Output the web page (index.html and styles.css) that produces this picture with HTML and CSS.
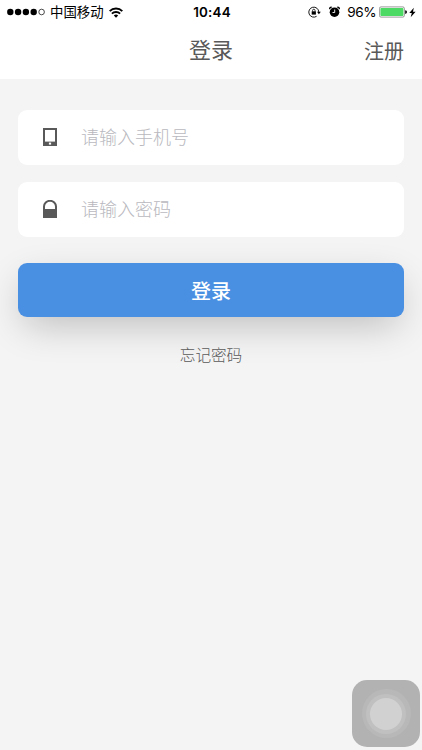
FILE: index.html
```html
<!DOCTYPE html>
<html lang="zh-CN">
<head>
    <meta charset="UTF-8">
    <meta name="viewport" content="width=device-width, initial-scale=1.0">
    <title>登录</title>
    <link rel="stylesheet" href="styles.css">
</head>
<body>

    <header class="header">
        <div class="status-bar">
            <div class="status-left">
                <svg class="signal" width="38" height="8" viewBox="0 0 38 8">
                    <circle cx="3.3" cy="4" r="3.2"/>
                    <circle cx="11.1" cy="4" r="3.2"/>
                    <circle cx="18.9" cy="4" r="3.2"/>
                    <circle cx="26.7" cy="4" r="3.2"/>
                    <circle cx="34.6" cy="4" r="2.8" fill="none" stroke="#000" stroke-width="0.7"/>
                </svg>
                <span class="carrier">中国移动</span>
                <svg class="wifi" width="14" height="11" viewBox="0 0 14 11" fill="none" stroke="#000" stroke-width="1.9">
                    <path d="M0.7 4.1a8.9 8.9 0 0 1 12.6 0"/>
                    <path d="M2.9 6.7a5.8 5.8 0 0 1 8.2 0"/>
                    <path d="M7 10.8L4.8 8.6a3.1 3.1 0 0 1 4.4 0z" fill="#000" stroke="none"/>
                </svg>
            </div>
            <span class="time">10:44</span>
            <div class="status-right">
                <svg class="rotation" width="13" height="12" viewBox="0 0 13 12">
                    <path d="M8.6 10.3A5 5 0 1 1 10.8 6" fill="none" stroke="#000" stroke-width="0.9"/>
                    <path d="M9 5.8h3.8l-1.9 2.4z"/>
                    <rect x="3.7" y="5.3" width="4.2" height="3.3"/>
                    <path d="M4.6 5.5V4.4a1.2 1.2 0 0 1 2.4 0v1.1" fill="none" stroke="#000" stroke-width="0.8"/>
                </svg>
                <svg class="alarm" width="11" height="12" viewBox="0 0 11 12">
                    <circle cx="5.5" cy="6.2" r="4.8"/>
                    <path d="M0.3 3.4a2 2 0 0 1 3-2.5zM10.7 3.4a2 2 0 0 0-3-2.5z"/>
                    <path d="M5.7 3.5v3H3.5" fill="none" stroke="#fff" stroke-width="0.9"/>
                </svg>
                <span class="percent">96%</span>
                <svg class="battery" width="28" height="12" viewBox="0 0 28 12">
                    <rect x="0.4" y="0.9" width="25" height="10.2" rx="1.6" fill="#fff" stroke="#555" stroke-width="0.6"/>
                    <rect x="1.4" y="1.9" width="23" height="8.2" rx="0.8" fill="#4cd964"/>
                    <path d="M26.2 4.3a1.8 1.8 0 0 1 0 3.6z"/>
                </svg>
                <svg class="bolt" width="7" height="11" viewBox="0 0 7 11">
                    <path d="M4.8 0.8L0.3 6h2.5L1.7 10.3 6.6 4.7H4z"/>
                </svg>
            </div>
        </div>
        <nav class="nav">
            <h1>登录</h1>
            <a class="register" href="#">注册</a>
        </nav>
    </header>

    <form class="login-form">
        <div class="field">
            <svg class="field-icon" width="14" height="18" viewBox="0 0 14 18">
                <rect width="14" height="18" fill="#595959"/>
                <rect x="2" y="2" width="10" height="11.6" fill="#fff"/>
                <rect x="5.9" y="14.6" width="2.2" height="2" fill="#fff"/>
            </svg>
            <input type="tel" placeholder="请输入手机号">
        </div>
        <div class="field">
            <svg class="field-icon" width="14" height="18" viewBox="0 0 14 18">
                <path d="M1 10V6.6a6 5.8 0 0 1 12 0V10" fill="none" stroke="#595959" stroke-width="2"/>
                <rect y="9" width="14" height="9" fill="#595959"/>
            </svg>
            <input type="password" placeholder="请输入密码">
        </div>
        <button type="submit" class="submit-btn">登录</button>
        <a class="forgot" href="#">忘记密码</a>
    </form>

    <div class="assistive-touch">
        <div class="ring">
            <div class="ring-inner">
                <div class="dot"></div>
            </div>
        </div>
    </div>

</body>
</html>
```

FILE: styles.css
```css
* {
    margin: 0;
    padding: 0;
    box-sizing: border-box;
}

body {
    position: relative;
    height: 750px;
    overflow: hidden;
    background: #f4f4f4;
    color: #595959;
    font-family: "Noto Sans CJK SC", sans-serif;
}

a {
    color: inherit;
    text-decoration: none;
}

svg {
    display: block;
    flex: none;
}

.header {
    height: 79px;
    background: #ffffff;
}

/* Status bar */
.status-bar {
    display: grid;
    grid-template-columns: 1fr auto 1fr;
    align-items: center;
    height: 24px;
    padding: 0 6px 0 7px;
    color: #000000;
}

.status-left,
.status-right {
    display: flex;
    align-items: center;
    height: 24px;
}

.status-right {
    justify-content: flex-end;
}

.carrier {
    margin: 0 5px 0 5px;
    padding-bottom: 2px;
    font-size: 13.4px;
    font-weight: 400;
    line-height: 22px;
}

.time {
    padding-left: 1px;
    font-family: Inter, sans-serif;
    font-size: 13.4px;
    font-weight: 600;
    letter-spacing: 0.2px;
}

.alarm {
    margin: 0 7px 0 8px;
}

.percent {
    margin-right: 3px;
    font-family: Inter, sans-serif;
    font-size: 13.6px;
    letter-spacing: -0.5px;
}

.bolt {
    margin-left: 2px;
}

/* Title row */
.nav {
    display: grid;
    grid-template-columns: 1fr auto 1fr;
    align-items: center;
    height: 48px;
    padding: 0 18px;
}

.nav h1 {
    grid-column: 2;
    padding-bottom: 1px;
    font-size: 22px;
    font-weight: 400;
}

.register {
    justify-self: end;
    padding-top: 5px;
    font-size: 20px;
}

/* Form */
.login-form {
    display: flex;
    flex-direction: column;
    padding: 31px 18px 0;
}

.field {
    display: flex;
    align-items: center;
    height: 54.5px;
    margin-bottom: 17.5px;
    padding-left: 25px;
    border-radius: 9px;
    background: #ffffff;
}

.field input {
    flex: 1;
    margin-left: 24px;
    padding-bottom: 2px;
    border: none;
    outline: none;
    background: none;
    font-family: inherit;
    font-size: 18px;
    font-weight: 300;
}

.field input::placeholder {
    color: #b8b8be;
}

.submit-btn {
    height: 54px;
    margin-top: 9px;
    border: none;
    border-radius: 9px;
    background: #4a90e2;
    box-shadow: 0 13px 38px -6px rgba(0, 0, 0, 0.24);
    color: #ffffff;
    font-family: inherit;
    font-size: 20px;
    font-weight: 500;
}

.forgot {
    align-self: center;
    margin-top: 26px;
    font-size: 15.6px;
    font-weight: 300;
    line-height: 23px;
}

/* Floating touch button */
.assistive-touch {
    position: absolute;
    right: 2px;
    bottom: 3px;
    display: flex;
    align-items: center;
    justify-content: center;
    width: 68px;
    height: 67px;
    border-radius: 15px;
    background: #b2b2b2;
}

.ring,
.ring-inner {
    display: flex;
    align-items: center;
    justify-content: center;
    border-radius: 50%;
}

.ring {
    width: 49px;
    height: 49px;
    background: #b8b8b8;
}

.ring-inner {
    width: 40px;
    height: 40px;
    background: #c0c0c0;
}

.dot {
    width: 32px;
    height: 32px;
    border-radius: 50%;
    background: #d1d1d1;
}
```
